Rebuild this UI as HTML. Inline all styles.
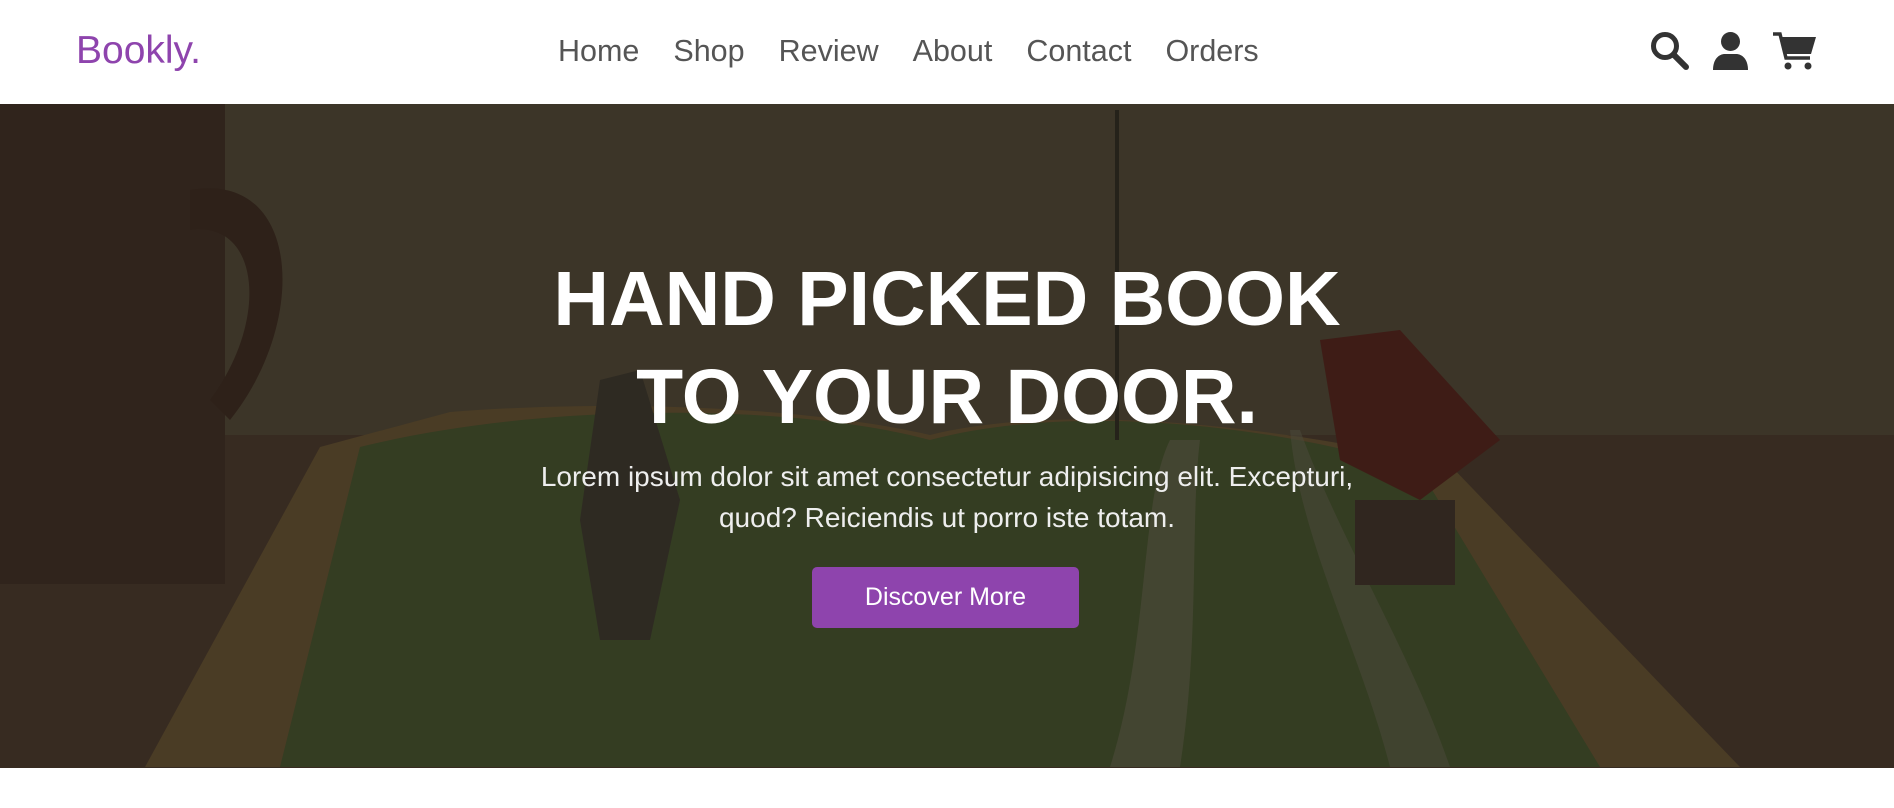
<!DOCTYPE html>
<html><head><meta charset="utf-8"><style>
*{margin:0;padding:0;box-sizing:border-box}
body{width:1894px;height:808px;background:#fff;font-family:"Liberation Sans",sans-serif;overflow:hidden;position:relative}
header{position:absolute;left:0;top:0;width:1894px;height:104px;background:#fff}
.logo{position:absolute;left:76px;top:29px;font-size:39px;color:#8e44ad}
nav{position:absolute;left:558px;top:34px;font-size:30.5px;color:#555;white-space:nowrap}
nav span{margin-right:34px}
.hero{position:absolute;left:0;top:104px;width:1894px;height:664px;overflow:hidden}
.hero svg{position:absolute;left:0;top:0}
.content{position:absolute;left:0;top:104px;width:1894px;text-align:center;color:#fff}
h1{position:absolute;left:0;width:1894px;top:146px;font-size:77px;line-height:98px;font-weight:bold}
p{position:absolute;left:0;width:1894px;top:352px;font-size:28px;line-height:41px;color:#eee}
.btn{position:absolute;left:812px;top:463px;width:267px;height:61px;background:#8e44ad;border-radius:5px;font-size:25px;line-height:61px;color:#fff}
</style></head><body>
<header>
<div class="logo">Bookly.</div>
<nav><span>Home</span><span>Shop</span><span>Review</span><span>About</span><span>Contact</span><span>Orders</span></nav>
<svg style="position:absolute;left:1650px;top:31px" width="40" height="40" viewBox="0 0 40 40"><circle cx="15" cy="15" r="11.5" fill="none" stroke="#333" stroke-width="5"/><line x1="24" y1="24" x2="36" y2="36" stroke="#333" stroke-width="6" stroke-linecap="round"/></svg>
<svg style="position:absolute;left:1713px;top:32px" width="35" height="38" viewBox="0 0 35 38"><circle cx="17.5" cy="9.5" r="9.5" fill="#333"/><path d="M0 38 C0 27 6 22 12 22 H23 C29 22 35 27 35 38Z" fill="#333"/></svg>
<svg style="position:absolute;left:1773px;top:32px" width="43" height="38" viewBox="0 0 43 38"><path d="M0 2 H7 L13 26 H37" fill="none" stroke="#333" stroke-width="3.5"/><path d="M8 5 H43 L38 22 H13Z" fill="#333"/><circle cx="15" cy="34" r="3.5" fill="#333"/><circle cx="35" cy="34" r="3.5" fill="#333"/></svg>
</header>
<div class="hero">
<svg width="1894" height="664" viewBox="0 104 1894 664">
<rect x="0" y="104" width="1894" height="664" fill="#3c3528"/>
<rect x="0" y="435" width="1894" height="333" fill="#372b21"/>
<rect x="0" y="104" width="225" height="480" fill="#30241c"/>
<path d="M190 190 C300 170 310 320 230 420 L210 400 C270 320 260 220 190 230Z" fill="#2e2119"/>
<path d="M320 447 L450 412 C600 400 800 405 930 435 C1050 405 1250 420 1450 465 L1740 767 L145 767Z" fill="#4a3c25"/>
<path d="M360 447 C550 400 800 405 930 440 C1060 405 1260 420 1420 470 L1600 767 L280 767Z" fill="#343d22"/>
<path d="M1170 440 C1140 500 1150 640 1110 767 L1180 767 C1200 640 1190 520 1200 440Z" fill="#4a4838" opacity=".7"/>
<path d="M1290 430 C1300 540 1360 650 1390 767 L1450 767 C1410 650 1340 540 1300 430Z" fill="#4a4838" opacity=".6"/>
<line x1="1117" y1="110" x2="1117" y2="440" stroke="#25221a" stroke-width="4"/>
<path d="M1320 340 L1400 330 L1500 440 L1420 500 L1340 460Z" fill="#3e1c16"/>
<rect x="1355" y="500" width="100" height="85" fill="#30261f"/>
<path d="M600 380 L640 370 L680 500 L650 640 L600 640 L580 520Z" fill="#2e2a22"/>
</svg>
</div>
<div class="content">
<h1>HAND PICKED BOOK<br>TO YOUR DOOR.</h1>
<p>Lorem ipsum dolor sit amet consectetur adipisicing elit. Excepturi,<br>quod? Reiciendis ut porro iste totam.</p>
<div class="btn">Discover More</div>
</div>
</body></html>
